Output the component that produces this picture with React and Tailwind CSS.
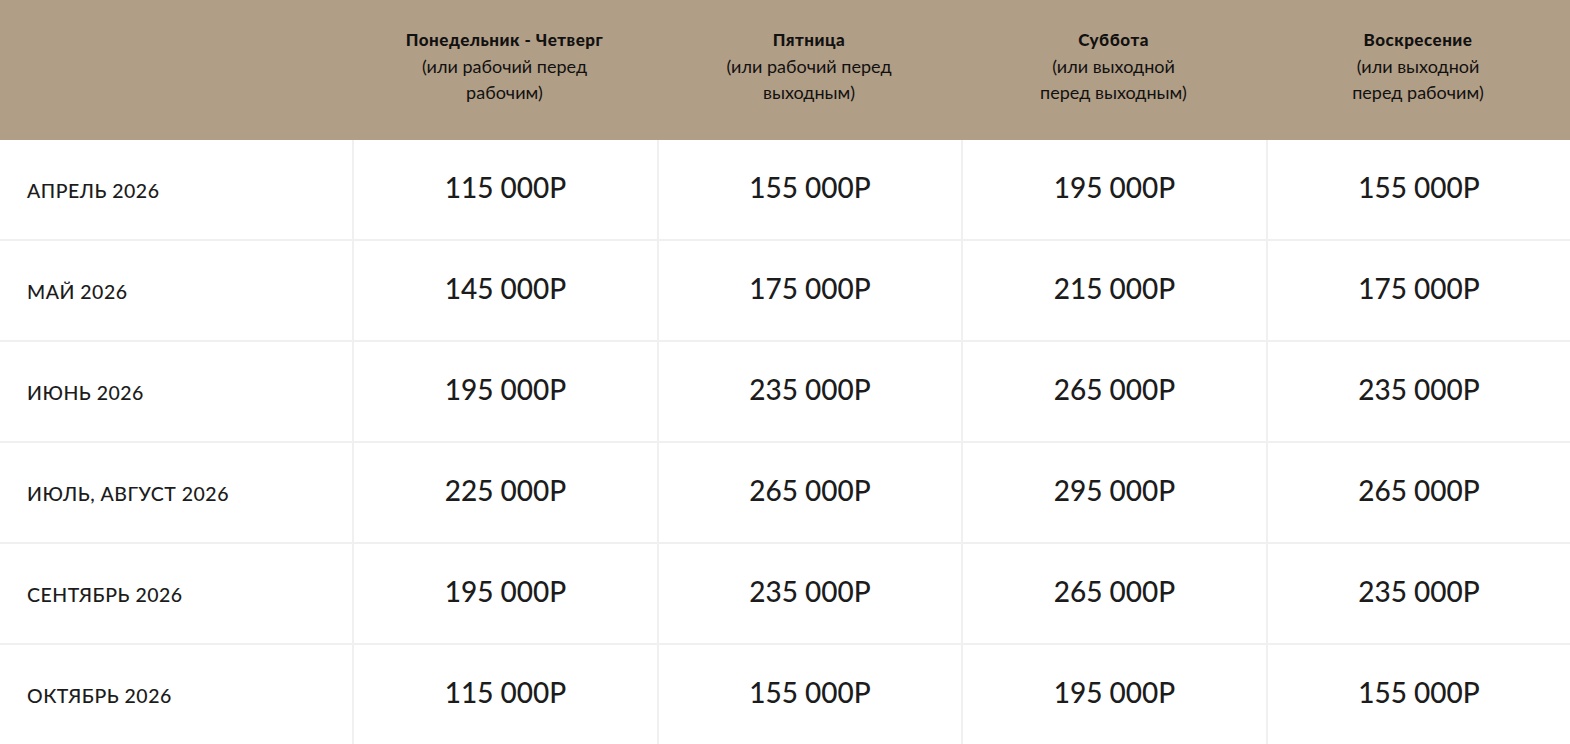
const headers = [
  { title: 'Понедельник - Четверг', sub: ['(или рабочий перед', 'рабочим)'] },
  { title: 'Пятница', sub: ['(или рабочий перед', 'выходным)'] },
  { title: 'Суббота', sub: ['(или выходной', 'перед выходным)'] },
  { title: 'Воскресение', sub: ['(или выходной', 'перед рабочим)'] },
];

const rows = [
  ['АПРЕЛЬ 2026', '115 000Р', '155 000Р', '195 000Р', '155 000Р'],
  ['МАЙ 2026', '145 000Р', '175 000Р', '215 000Р', '175 000Р'],
  ['ИЮНЬ 2026', '195 000Р', '235 000Р', '265 000Р', '235 000Р'],
  ['ИЮЛЬ, АВГУСТ 2026', '225 000Р', '265 000Р', '295 000Р', '265 000Р'],
  ['СЕНТЯБРЬ 2026', '195 000Р', '235 000Р', '265 000Р', '235 000Р'],
  ['ОКТЯБРЬ 2026', '115 000Р', '155 000Р', '195 000Р', '155 000Р'],
];

export default function App() {
  return (
    <div className="w-[1570px] h-[744px] overflow-hidden bg-white font-['Lato',sans-serif] text-[#1c1c1c]">
      {/* шапка */}
      <div className="grid grid-cols-[352px_305px_304px_305px_304px] h-[140px] bg-[#b19e86]">
        <div />
        {headers.map((h) => (
          <div key={h.title} className="flex flex-col items-center pt-[27px] text-center leading-[26px] text-[#111]">
            <div className="text-[17px] font-black tracking-[0.5px]">{h.title}</div>
            {h.sub.map((s) => (
              <div key={s} className="text-[18px]">{s}</div>
            ))}
          </div>
        ))}
      </div>

      {/* строки */}
      {rows.map((r) => (
        <div
          key={r[0]}
          className="grid grid-cols-[352px_305px_304px_305px_304px] h-[101px] border-b-2 border-[#f0f0f0]"
        >
          <div className="flex items-center pl-[27px] pt-[2px] text-[19.5px] font-medium tracking-[0.5px]">
            {r[0]}
          </div>
          {r.slice(1).map((p, j) => (
            <div
              key={j}
              className="flex items-center justify-center border-l-2 border-[#f0f0f0] pb-[6px] text-[28px] font-medium"
            >
              {p}
            </div>
          ))}
        </div>
      ))}
    </div>
  );
}
